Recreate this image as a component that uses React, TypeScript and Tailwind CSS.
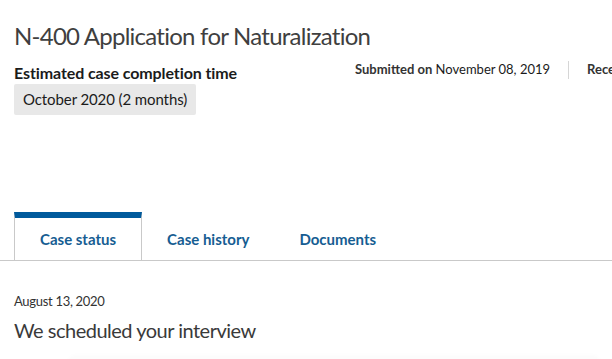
export default function App() {
  const tabs = ["Case status", "Case history", "Documents"]

  return (
    <div className="w-[612px] h-[359px] overflow-hidden bg-white font-['Lato','Liberation_Sans',sans-serif] whitespace-nowrap">
      <div className="px-[14px] pt-[21px]">
        <h1 className="text-[24px] leading-[30px] tracking-[-0.75px] text-[#3f3f3f]">N-400 Application for Naturalization</h1>

        <div className="flex mt-[12px]">
          <div className="w-[341px] shrink-0">
            <p className="text-[16px] leading-[20px] font-bold tracking-[-0.1px] text-[#1b1b1b]">Estimated case completion time</p>
            <div className="mt-[1px] inline-block bg-[#e8e8e8] rounded-[2px] px-[9px] h-[31px] leading-[31px] text-[15px] tracking-[-0.1px] text-[#1b1b1b]">
              October 2020 (2 months)
            </div>
          </div>
          <div className="flex items-start text-[13px] text-[#1b1b1b] -mt-[4px]">
            <span className="leading-[20px]">
              <span className="font-bold text-[#333]">Submitted on</span> November 08, 2019
            </span>
            <span className="mx-[18px] mt-[2px] w-px h-[18px] bg-[#d6d6d6]" />
            <span className="leading-[20px] font-bold text-[#333]">Received on</span>
          </div>
        </div>
      </div>

      {/* Tabs */}
      <div className="mt-[97px] flex border-b border-[#c9c9c9]">
        <div className="w-[14px] shrink-0" />
        {tabs.map((tab, i) => (
          <button
            key={tab}
            className={`h-[48px] px-[25px] text-[15px] font-bold text-[#165d92] ${
              i === 0
                ? "border-t-[6px] border-t-[#005a9c] border-x border-x-[#c9c9c9] bg-white -mb-px pt-[1px]"
                : "pt-[6px]"
            }`}
          >
            {tab}
          </button>
        ))}
      </div>

      <div className="px-[14px] pt-[31px]">
        <p className="text-[13px] leading-[18px] tracking-[-0.3px] text-[#333]">August 13, 2020</p>
        <h2 className="mt-[7px] text-[20px] leading-[26px] tracking-[-0.5px] text-[#3a3a3a]">We scheduled your interview</h2>
        <div className="ml-[56px] mt-[14px] h-[40px] rounded-[4px] bg-[#fcfcfc] shadow-[0_0_6px_rgba(0,0,0,0.03)]" />
      </div>
    </div>
  )
}
